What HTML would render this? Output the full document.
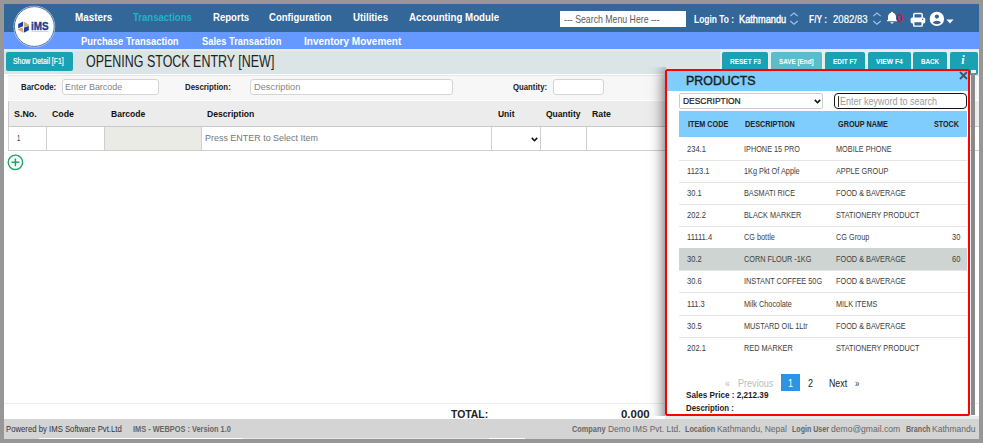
<!DOCTYPE html>
<html><head><meta charset="utf-8"><style>
html,body{margin:0;padding:0;width:983px;height:443px;overflow:hidden;position:relative;background:#979797}
body>div,body>span,body>svg{position:absolute;box-sizing:border-box}
span{line-height:1;white-space:nowrap;transform-origin:0 0;font-family:"Liberation Sans",sans-serif}
</style></head><body>
<div style="left:0px;top:0px;width:983px;height:443px;background:#979797"></div>
<div style="left:4px;top:4px;width:975.2px;height:434.8px;background:#fff"></div>
<div style="left:4px;top:4px;width:975px;height:28px;background:#336699"></div>
<div style="left:4px;top:32px;width:975px;height:17.2px;background:#6699ff"></div>
<div style="left:4px;top:49.2px;width:975px;height:24.8px;background:#dbe4e6"></div>
<span style="left:74.60px;top:12px;font-size:11.8px;color:#fff;font-weight:700;transform:scaleX(0.836);">Masters</span>
<span style="left:132.80px;top:12px;font-size:11.8px;color:#21b3c5;font-weight:700;transform:scaleX(0.808);">Transactions</span>
<span style="left:212.60px;top:12px;font-size:11.8px;color:#fff;font-weight:700;transform:scaleX(0.812);">Reports</span>
<span style="left:269.30px;top:12px;font-size:11.8px;color:#fff;font-weight:700;transform:scaleX(0.811);">Configuration</span>
<span style="left:353.20px;top:12px;font-size:11.8px;color:#fff;font-weight:700;transform:scaleX(0.824);">Utilities</span>
<span style="left:409.20px;top:12px;font-size:11.8px;color:#fff;font-weight:700;transform:scaleX(0.823);">Accounting Module</span>
<span style="left:81.40px;top:35px;font-size:11.6px;color:#fff;font-weight:700;transform:scaleX(0.810);">Purchase Transaction</span>
<span style="left:201.50px;top:35px;font-size:11.6px;color:#fff;font-weight:700;transform:scaleX(0.806);">Sales Transaction</span>
<span style="left:304.30px;top:35px;font-size:11.6px;color:#fff;font-weight:700;transform:scaleX(0.863);">Inventory Movement</span>
<div style="left:559.8px;top:10.6px;width:126.5px;height:16.1px;background:#fff"></div>
<span style="left:564.20px;top:15px;font-size:10.3px;color:#5a5a5a;font-weight:400;transform:scaleX(0.849);">--- Search Menu Here ---</span>
<span style="left:693.80px;top:14px;font-size:11.3px;color:#fff;font-weight:700;transform:scaleX(0.746);">Login To :</span>
<span style="left:739.00px;top:14px;font-size:11.3px;color:#fff;font-weight:400;transform:scaleX(0.817);-webkit-text-stroke:0.4px #fff">Kathmandu</span>
<span style="left:808.80px;top:14px;font-size:11.3px;color:#fff;font-weight:700;transform:scaleX(0.745);">F/Y :</span>
<span style="left:833.00px;top:14px;font-size:11.3px;color:#fff;font-weight:400;transform:scaleX(0.847);-webkit-text-stroke:0.2px #fff">2082/83</span>
<span style="left:897.00px;top:12px;font-size:11.6px;color:#d2112a;font-weight:400;transform:scaleX(0.930);-webkit-text-stroke:0.3px #d2112a">0</span>
<div style="left:5.5px;top:51.9px;width:67.3px;height:19.0px;background:#1aa1b4;border-radius:2px"></div>
<span style="left:13.30px;top:57px;font-size:8.3px;color:#fff;font-weight:400;transform:scaleX(0.834);-webkit-text-stroke:0.2px #fff">Show Detail [F1]</span>
<span style="left:86.40px;top:53.0px;font-size:15.5px;color:#222;font-weight:400;transform:scale(0.804,1.100);">OPENING STOCK ENTRY [NEW]</span>
<div style="left:4px;top:49.2px;width:975px;height:1.4px;background:#e6ece6"></div>
<div style="left:719.8px;top:49.2px;width:259.2px;height:25.8px;background:#ecede9"></div>
<div style="left:722.3px;top:51.8px;width:45.7px;height:23.2px;background:#1aa1b4;border-radius:2px"></div>
<span style="left:729.90px;top:58px;font-size:7.7px;color:#fff;font-weight:700;transform:scaleX(0.842);">RESET F3</span>
<div style="left:771px;top:51.8px;width:50.7px;height:23.2px;background:#5cbccb;border-radius:2px"></div>
<span style="left:779.20px;top:58px;font-size:7.7px;color:#fff;font-weight:700;transform:scaleX(0.822);">SAVE [End]</span>
<div style="left:825.3px;top:51.8px;width:39.45px;height:23.2px;background:#1aa1b4;border-radius:2px"></div>
<span style="left:832.70px;top:58px;font-size:7.7px;color:#fff;font-weight:700;transform:scaleX(0.834);">EDIT F7</span>
<div style="left:867.75px;top:51.8px;width:42.85px;height:23.2px;background:#1aa1b4;border-radius:2px"></div>
<span style="left:875.60px;top:58px;font-size:7.7px;color:#fff;font-weight:700;transform:scaleX(0.867);">VIEW F4</span>
<div style="left:913px;top:51.8px;width:33.6px;height:23.2px;background:#1aa1b4;border-radius:2px"></div>
<span style="left:920.90px;top:58px;font-size:7.7px;color:#fff;font-weight:700;transform:scaleX(0.813);">BACK</span>
<div style="left:949.75px;top:51.8px;width:28.25px;height:23.2px;background:#1aa1b4;border-radius:2px"></div>
<div style="left:8px;top:75px;width:971px;height:24.5px;background:#f7f7f7;border-top:1px solid #e6e6e6"></div>
<span style="left:21.00px;top:82px;font-size:9.4px;color:#222;font-weight:700;transform:scaleX(0.832);">BarCode:</span>
<div style="left:61.6px;top:79.3px;width:97.3px;height:15.7px;background:#fff;border:1px solid #d5d5d5;border-radius:3px;box-sizing:border-box"></div>
<span style="left:64.80px;top:82px;font-size:9.6px;color:#858585;font-weight:400;transform:scaleX(0.934);">Enter Barcode</span>
<span style="left:185.00px;top:82px;font-size:9.4px;color:#222;font-weight:700;transform:scaleX(0.837);">Description:</span>
<div style="left:249.7px;top:79.3px;width:202.9px;height:15.7px;background:#fff;border:1px solid #d5d5d5;border-radius:3px;box-sizing:border-box"></div>
<span style="left:253.80px;top:82px;font-size:9.6px;color:#858585;font-weight:400;transform:scaleX(0.967);">Description</span>
<span style="left:513.00px;top:82px;font-size:9.4px;color:#222;font-weight:700;transform:scaleX(0.827);">Quantity:</span>
<div style="left:552.6px;top:79.3px;width:51.9px;height:15.7px;background:#fff;border:1px solid #d5d5d5;border-radius:3px;box-sizing:border-box"></div>
<div style="left:7.5px;top:100.5px;width:971.5px;height:26.0px;background:#ececec;border-left:1.5px solid #c8c8c8;border-bottom:1.5px solid #c8c8c8;box-sizing:border-box"></div>
<span style="left:13.50px;top:109px;font-size:9.7px;color:#111;font-weight:700;transform:scaleX(0.919);">S.No.</span>
<span style="left:52.20px;top:109px;font-size:9.7px;color:#111;font-weight:700;transform:scaleX(0.907);">Code</span>
<span style="left:110.60px;top:109px;font-size:9.7px;color:#111;font-weight:700;transform:scaleX(0.881);">Barcode</span>
<span style="left:207.20px;top:109px;font-size:9.7px;color:#111;font-weight:700;transform:scaleX(0.888);">Description</span>
<span style="left:497.70px;top:109px;font-size:9.7px;color:#111;font-weight:700;transform:scaleX(0.875);">Unit</span>
<span style="left:546.10px;top:109px;font-size:9.7px;color:#111;font-weight:700;transform:scaleX(0.879);">Quantity</span>
<span style="left:592.30px;top:109px;font-size:9.7px;color:#111;font-weight:700;transform:scaleX(0.900);">Rate</span>
<div style="left:7.5px;top:126.5px;width:971.5px;height:24.0px;background:#fff;border-left:1.5px solid #cfcfcf;border-bottom:1.5px solid #cfcfcf;box-sizing:border-box"></div>
<div style="left:104.4px;top:126.5px;width:96.9px;height:23.0px;background:#ebebe6"></div>
<div style="left:45.5px;top:126.5px;width:1.0px;height:23.5px;background:#cfcfcf"></div>
<div style="left:103.8px;top:126.5px;width:1.0px;height:23.5px;background:#cfcfcf"></div>
<div style="left:200.8px;top:126.5px;width:1.0px;height:23.5px;background:#cfcfcf"></div>
<div style="left:491.0px;top:126.5px;width:1.0px;height:23.5px;background:#cfcfcf"></div>
<div style="left:539.5px;top:126.5px;width:1.0px;height:23.5px;background:#cfcfcf"></div>
<div style="left:585.7px;top:126.5px;width:1.0px;height:23.5px;background:#cfcfcf"></div>
<span style="left:17.00px;top:133px;font-size:9.4px;color:#333;font-weight:400;transform:scaleX(0.629);">1</span>
<span style="left:204.80px;top:133px;font-size:9.9px;color:#777;font-weight:400;transform:scaleX(0.906);">Press ENTER to Select Item</span>
<svg style="left:7px;top:154px" width="17" height="17" viewBox="0 0 17 17"><circle cx="8.4" cy="8.3" r="7.2" fill="none" stroke="#1aa463" stroke-width="1.4"/><path d="M8.4 4.4v7.8M4.5 8.3h7.8" stroke="#1aa463" stroke-width="1.5"/></svg>
<div style="left:4px;top:403px;width:975px;height:1px;background:#eee"></div>
<span style="left:450.90px;top:409px;font-size:11.8px;color:#222;font-weight:700;transform:scaleX(0.880);">TOTAL:</span>
<span style="left:621.30px;top:409px;font-size:11.8px;color:#222;font-weight:700;transform:scaleX(0.971);">0.000</span>
<span style="left:790.00px;top:409px;font-size:11.8px;color:#333;font-weight:700;transform:scaleX(0.959);">0.00</span>
<div style="left:630px;top:67px;width:35.6px;height:349px;overflow:hidden"><div style="position:absolute;left:35.2px;top:2px;width:304.8px;height:400px;box-shadow:0 0 14px 0px rgba(0,0,0,0.7);background:#fff"></div></div>
<div style="left:665.2px;top:416px;width:313.8px;height:3.2px;background:#e7eded"></div>
<div style="left:665.2px;top:69px;width:304.8px;height:346.8px;border-radius:2px;border:2.2px solid #f00;background:#fff;box-sizing:border-box"></div>
<div style="left:971.3px;top:70px;width:4.2px;height:344.5px;background:#8a8a8a"></div>
<div style="left:971px;top:69.8px;width:4.5px;height:3.2px;background:#f4f4f4"></div>
<div style="left:667.4px;top:71.2px;width:300.4px;height:19.6px;background:#7fcdfd"></div>
<span style="left:686.20px;top:75.0px;font-size:12.8px;color:#1e1e1e;font-weight:400;transform:scale(0.970,1.001);-webkit-text-stroke:0.45px #1e1e1e">PRODUCTS</span>
<div style="left:679.3px;top:93.3px;width:143.7px;height:16.2px;background:#fff;border:1px solid #ccc;border-radius:2px;box-sizing:border-box"></div>
<span style="left:682.60px;top:97.0px;font-size:10.0px;color:#1a1a1a;font-weight:400;transform:scale(0.844,0.880);-webkit-text-stroke:0.25px #1a1a1a">DESCRIPTION</span>
<div style="left:834.1px;top:93.1px;width:133.1px;height:15.9px;background:#fff;border:1.8px solid #151515;border-radius:4px;box-sizing:border-box"></div>
<span style="left:839.50px;top:96px;font-size:10.5px;color:#9a9a9a;font-weight:400;transform:scaleX(0.857);">Enter keyword to search</span>
<div style="left:838px;top:96px;width:1px;height:10.5px;background:#333"></div>
<div style="left:679px;top:111.2px;width:288.2px;height:26.2px;background:#7fcdfd"></div>
<span style="left:687.50px;top:120px;font-size:9.0px;color:#222;font-weight:700;transform:scaleX(0.806);">ITEM CODE</span>
<span style="left:744.90px;top:120px;font-size:9.0px;color:#222;font-weight:700;transform:scaleX(0.810);">DESCRIPTION</span>
<span style="left:837.50px;top:120px;font-size:9.0px;color:#222;font-weight:700;transform:scaleX(0.807);">GROUP NAME</span>
<span style="left:934.00px;top:120px;font-size:9.0px;color:#222;font-weight:700;transform:scaleX(0.797);">STOCK</span>
<div style="left:679px;top:159.55px;width:288.2px;height:1.0px;background:#e2e5e8"></div>
<span style="left:686.80px;top:145px;font-size:8.6px;color:#404040;transform:scaleX(0.88)">234.1</span>
<span style="left:743.70px;top:145px;font-size:8.6px;color:#404040;transform:scaleX(0.85)">IPHONE 15 PRO</span>
<span style="left:836.20px;top:145px;font-size:8.6px;color:#404040;transform:scaleX(0.85)">MOBILE PHONE</span>
<div style="left:679px;top:181.70000000000002px;width:288.2px;height:1.0px;background:#e2e5e8"></div>
<span style="left:686.80px;top:167px;font-size:8.6px;color:#404040;transform:scaleX(0.88)">1123.1</span>
<span style="left:743.70px;top:167px;font-size:8.6px;color:#404040;transform:scaleX(0.85)">1Kg Pkt Of Apple</span>
<span style="left:836.20px;top:167px;font-size:8.6px;color:#404040;transform:scaleX(0.85)">APPLE GROUP</span>
<div style="left:679px;top:203.85px;width:288.2px;height:1.0px;background:#e2e5e8"></div>
<span style="left:686.80px;top:189px;font-size:8.6px;color:#404040;transform:scaleX(0.88)">30.1</span>
<span style="left:743.70px;top:189px;font-size:8.6px;color:#404040;transform:scaleX(0.85)">BASMATI RICE</span>
<span style="left:836.20px;top:189px;font-size:8.6px;color:#404040;transform:scaleX(0.85)">FOOD &amp; BAVERAGE</span>
<div style="left:679px;top:226.0px;width:288.2px;height:1.0px;background:#e2e5e8"></div>
<span style="left:686.80px;top:211px;font-size:8.6px;color:#404040;transform:scaleX(0.88)">202.2</span>
<span style="left:743.70px;top:211px;font-size:8.6px;color:#404040;transform:scaleX(0.85)">BLACK MARKER</span>
<span style="left:836.20px;top:211px;font-size:8.6px;color:#404040;transform:scaleX(0.85)">STATIONERY PRODUCT</span>
<div style="left:679px;top:248.15px;width:288.2px;height:1.0px;background:#e2e5e8"></div>
<span style="left:686.80px;top:233px;font-size:8.6px;color:#404040;transform:scaleX(0.88)">11111.4</span>
<span style="left:743.70px;top:233px;font-size:8.6px;color:#404040;transform:scaleX(0.85)">CG bottle</span>
<span style="left:836.20px;top:233px;font-size:8.6px;color:#404040;transform:scaleX(0.85)">CG Group</span>
<span style="left:951.60px;top:233px;font-size:8.6px;color:#404040;transform:scaleX(0.88)">30</span>
<div style="left:679px;top:248.15px;width:288.2px;height:22.15px;background:#cdd4d2"></div>
<div style="left:679px;top:270.3px;width:288.2px;height:1.0px;background:#e2e5e8"></div>
<span style="left:686.80px;top:255px;font-size:8.6px;color:#404040;transform:scaleX(0.88)">30.2</span>
<span style="left:743.70px;top:255px;font-size:8.6px;color:#404040;transform:scaleX(0.85)">CORN FLOUR -1KG</span>
<span style="left:836.20px;top:255px;font-size:8.6px;color:#404040;transform:scaleX(0.85)">FOOD &amp; BAVERAGE</span>
<span style="left:951.60px;top:255px;font-size:8.6px;color:#404040;transform:scaleX(0.88)">60</span>
<div style="left:679px;top:292.44999999999993px;width:288.2px;height:1.0px;background:#e2e5e8"></div>
<span style="left:686.80px;top:277px;font-size:8.6px;color:#404040;transform:scaleX(0.88)">30.6</span>
<span style="left:743.70px;top:277px;font-size:8.6px;color:#404040;transform:scaleX(0.85)">INSTANT COFFEE 50G</span>
<span style="left:836.20px;top:277px;font-size:8.6px;color:#404040;transform:scaleX(0.85)">FOOD &amp; BAVERAGE</span>
<div style="left:679px;top:314.59999999999997px;width:288.2px;height:1.0px;background:#e2e5e8"></div>
<span style="left:686.80px;top:300px;font-size:8.6px;color:#404040;transform:scaleX(0.88)">111.3</span>
<span style="left:743.70px;top:300px;font-size:8.6px;color:#404040;transform:scaleX(0.85)">Milk Chocolate</span>
<span style="left:836.20px;top:300px;font-size:8.6px;color:#404040;transform:scaleX(0.85)">MILK ITEMS</span>
<div style="left:679px;top:336.75px;width:288.2px;height:1.0px;background:#e2e5e8"></div>
<span style="left:686.80px;top:322px;font-size:8.6px;color:#404040;transform:scaleX(0.88)">30.5</span>
<span style="left:743.70px;top:322px;font-size:8.6px;color:#404040;transform:scaleX(0.85)">MUSTARD OIL 1Ltr</span>
<span style="left:836.20px;top:322px;font-size:8.6px;color:#404040;transform:scaleX(0.85)">FOOD &amp; BAVERAGE</span>
<span style="left:686.80px;top:344px;font-size:8.6px;color:#404040;transform:scaleX(0.88)">202.1</span>
<span style="left:743.70px;top:344px;font-size:8.6px;color:#404040;transform:scaleX(0.85)">RED MARKER</span>
<span style="left:836.20px;top:344px;font-size:8.6px;color:#404040;transform:scaleX(0.85)">STATIONERY PRODUCT</span>
<div style="left:780.5px;top:374.2px;width:19.2px;height:17.3px;background:#2b94e5"></div>
<span style="left:725.40px;top:378px;font-size:11.5px;color:#bbb;font-weight:400;transform:scaleX(0.750);">«</span>
<span style="left:737.50px;top:378px;font-size:10.5px;color:#bbb;font-weight:400;transform:scaleX(0.864);">Previous</span>
<span style="left:787.50px;top:378px;font-size:10.5px;color:#fff;font-weight:400;transform:scaleX(0.855);">1</span>
<span style="left:808.20px;top:378px;font-size:10.5px;color:#222;font-weight:400;transform:scaleX(0.855);">2</span>
<span style="left:828.50px;top:378px;font-size:10.5px;color:#222;font-weight:400;transform:scaleX(0.838);">Next</span>
<span style="left:855.20px;top:378px;font-size:11.5px;color:#333;font-weight:400;transform:scaleX(0.687);">»</span>
<span style="left:686.20px;top:390px;font-size:9.4px;color:#222;font-weight:700;transform:scaleX(0.869);">Sales Price : 2,212.39</span>
<span style="left:686.20px;top:403px;font-size:9.7px;color:#222;font-weight:700;transform:scaleX(0.809);">Description :</span>
<div style="left:4px;top:419.2px;width:975.2px;height:19.6px;background:#d4d4d4"></div>
<div style="left:39px;top:437.6px;width:204px;height:1.4px;background:#fff"></div>
<div style="left:489px;top:437.6px;width:36px;height:1.4px;background:#fff"></div>
<div style="left:243px;top:437.6px;width:246px;height:1.4px;background:#ebe5df"></div>
<span style="left:6.10px;top:425px;font-size:8.7px;color:#333;font-weight:400;transform:scaleX(0.891);">Powered by IMS Software Pvt.Ltd</span>
<span style="left:132.80px;top:425px;font-size:8.7px;color:#666;font-weight:700;transform:scaleX(0.848);">IMS - WEBPOS : Version 1.0</span>
<span style="left:572.30px;top:425px;font-size:8.7px;color:#666;font-weight:700;transform:scaleX(0.847);">Company</span>
<span style="left:607.60px;top:425px;font-size:8.7px;color:#666;font-weight:400;transform:scaleX(0.962);">Demo IMS Pvt. Ltd.</span>
<span style="left:685.30px;top:425px;font-size:8.7px;color:#666;font-weight:700;transform:scaleX(0.833);">Location</span>
<span style="left:717.30px;top:425px;font-size:8.7px;color:#666;font-weight:400;transform:scaleX(0.970);">Kathmandu, Nepal</span>
<span style="left:792.20px;top:425px;font-size:8.7px;color:#666;font-weight:700;transform:scaleX(0.814);">Login User</span>
<span style="left:831.40px;top:425px;font-size:8.7px;color:#666;font-weight:400;transform:scaleX(0.985);">demo@gmail.com</span>
<span style="left:905.60px;top:425px;font-size:8.7px;color:#666;font-weight:700;transform:scaleX(0.815);">Branch</span>
<span style="left:931.90px;top:425px;font-size:8.7px;color:#666;font-weight:400;transform:scaleX(0.978);">Kathmandu</span>
<svg style="left:12px;top:5px" width="45" height="44" viewBox="12 5 45 44">
<circle cx="34.35" cy="26.55" r="20.5" fill="#fff" stroke="#dfe8f2" stroke-width="0.5"/>
<circle cx="34.35" cy="26.55" r="19.9" fill="none" stroke="#4a72a0" stroke-width="1.0"/>
<polygon points="18.2,24.05 23.05,21.5 23.05,26.2 18.2,28.2" fill="#1d3fa6"/>
<polygon points="23.8,21.6 28.8,24.4 28.8,25.9 24.0,26.9" fill="#d6ad6e"/>
<polygon points="18.2,28.75 23.05,27.6 23.05,32.5 18.2,29.9" fill="#d6ad6e"/>
<polygon points="24.1,27.6 28.8,25.9 28.8,30.2 23.8,32.8" fill="#1d3fa6"/>
<text x="30.9" y="29.6" font-family="Liberation Sans" font-weight="700" font-size="10.2" fill="#1c3d8f" textLength="17.6" lengthAdjust="spacingAndGlyphs" stroke="#1c3d8f" stroke-width="0.35">iMS</text>
<rect x="31.3" y="31.1" width="17.4" height="0.7" fill="#c5c5cf"/>
</svg>
<svg style="left:789px;top:11px" width="10" height="15" viewBox="0 0 10 15"><path d="M1.3 5.1 L5 2.0 L8.7 5.1 M1.3 10.0 L5 13.3 L8.7 10.0" fill="none" stroke="#a3c1f3" stroke-width="1.15"/></svg>
<svg style="left:872.3px;top:11px" width="10" height="15" viewBox="0 0 10 15"><path d="M1.3 5.1 L5 2.0 L8.7 5.1 M1.3 10.0 L5 13.3 L8.7 10.0" fill="none" stroke="#a3c1f3" stroke-width="1.15"/></svg>
<svg style="left:886px;top:11px" width="12" height="13" viewBox="0 0 12 13"><path d="M6 0.8c0.6 0 1 0.4 1 0.9 1.9 0.5 3 2.1 3 4.3v2.6l1.4 1.6H0.6L2 8.6V6c0-2.2 1.1-3.8 3-4.3 0-0.5 0.4-0.9 1-0.9z" fill="#fff"/><path d="M4.5 11.2h3c0 0.9-0.7 1.4-1.5 1.4s-1.5-0.5-1.5-1.4z" fill="#fff"/></svg>
<svg style="left:909.5px;top:11.5px" width="16" height="15" viewBox="0 0 16 15"><rect x="3.7" y="1.4" width="8.5" height="5.2" rx="1.3" fill="none" stroke="#fff" stroke-width="1.45"/><rect x="0.6" y="5.4" width="14.7" height="6.2" rx="1.8" fill="#fff"/><rect x="3.7" y="9.4" width="8.5" height="4.7" rx="0.5" fill="#336699" stroke="#fff" stroke-width="1.45"/><circle cx="12.6" cy="7.3" r="0.75" fill="#336699"/></svg>
<svg style="left:929px;top:11px" width="16" height="16" viewBox="0 0 16 16"><circle cx="7.9" cy="7.9" r="7.2" fill="#fff"/><circle cx="7.9" cy="5.6" r="2.1" fill="#336699"/><path d="M3.8 11.6c0.9-1.2 2.4-1.9 4.1-1.9s3.2 0.7 4.1 1.9c-1 1-2.5 1.6-4.1 1.6s-3.1-0.6-4.1-1.6z" fill="#336699"/></svg>
<svg style="left:945.5px;top:18.5px" width="8" height="5" viewBox="0 0 8 5"><path d="M0.4 0.6h7.2L4 4.6z" fill="#fff"/></svg>
<span style="left:961.3px;top:54px;font-size:12px;color:#fff;font-family:&quot;Liberation Serif&quot;,serif;font-style:italic;font-weight:700">i</span>
<svg style="left:531px;top:136.5px" width="7" height="5" viewBox="0 0 7 5"><path d="M0.8 0.9L3.5 3.7L6.2 0.9" fill="none" stroke="#111" stroke-width="1.6"/></svg>
<svg style="left:814.3px;top:99px" width="7" height="5" viewBox="0 0 7 5"><path d="M0.8 0.9L3.5 3.7L6.2 0.9" fill="none" stroke="#111" stroke-width="1.6"/></svg>
<svg style="left:958.5px;top:71px" width="9" height="9" viewBox="0 0 9 9"><path d="M1 1L8 8M8 1L1 8" stroke="#3e5767" stroke-width="1.9"/></svg>
</body></html>
